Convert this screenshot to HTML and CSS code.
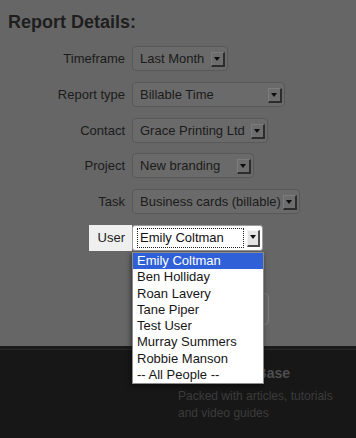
FILE: index.html
```html
<!DOCTYPE html>
<html lang="en">
<head>
    <meta charset="UTF-8">
    <meta name="viewport" content="width=device-width, initial-scale=1.0">
    <title>Report Details</title>
    <link rel="stylesheet" href="styles.css">
</head>
<body>
    <div class="page">
        <h1>Report Details:</h1>
        <div class="form">
            <div class="field">
                <div class="field-label"><label>Timeframe</label></div>
                <div class="select select-timeframe">
                    <span class="select-value">Last Month</span>
                    <span class="select-arrow"></span>
                </div>
            </div>
            <div class="field">
                <div class="field-label"><label>Report type</label></div>
                <div class="select select-type">
                    <span class="select-value">Billable Time</span>
                    <span class="select-arrow"></span>
                </div>
            </div>
            <div class="field">
                <div class="field-label"><label>Contact</label></div>
                <div class="select select-contact">
                    <span class="select-value">Grace Printing Ltd</span>
                    <span class="select-arrow"></span>
                </div>
            </div>
            <div class="field">
                <div class="field-label"><label>Project</label></div>
                <div class="select select-project">
                    <span class="select-value">New branding</span>
                    <span class="select-arrow"></span>
                </div>
            </div>
            <div class="field">
                <div class="field-label"><label>Task</label></div>
                <div class="select select-task">
                    <span class="select-value">Business cards (billable)</span>
                    <span class="select-arrow"></span>
                </div>
            </div>
            <div class="field is-active">
                <div class="field-label"><label>User</label></div>
                <div class="select select-user">
                    <span class="select-value">Emily Coltman</span>
                    <span class="select-arrow"></span>
                </div>
            </div>
        </div>

        <!-- submit button sits under the open list -->
        <div class="form-actions">
            <span class="button"></span>
        </div>

        <ul class="dropdown">
            <li class="is-selected">Emily Coltman</li>
            <li>Ben Holliday</li>
            <li>Roan Lavery</li>
            <li>Tane Piper</li>
            <li>Test User</li>
            <li>Murray Summers</li>
            <li>Robbie Manson</li>
            <li>-- All People --</li>
        </ul>
    </div>

    <div class="footer">
        <div class="help">
            <h3>Knowledge Base</h3>
            <p>Packed with articles, tutorials<br>and video guides</p>
        </div>
    </div>
</body>
</html>
```

FILE: styles.css
```css
*{
    margin: 0;
    padding: 0;
    box-sizing: border-box;
}

body{
    font-family: "Liberation Sans", Arial, sans-serif;
    font-size: 13px;
    color: #1b1b1b;
    background: #171717;
    width: 356px;
    height: 438px;
    overflow: hidden;
}

.page{
    position: relative;
    height: 346px;
    background: #666;
    padding-top: 11px;
}

.page h1{
    font-size: 18px;
    line-height: 22px;
    font-weight: bold;
    color: #1e1e1e;
    padding-left: 8px;
}

.form{
    margin-top: 13px;
    display: flex;
    flex-direction: column;
    gap: 10.75px;
}

.field{
    display: flex;
    align-items: center;
    height: 25px;
}

.field-label{
    width: 132px;
    height: 100%;
    display: flex;
    justify-content: flex-end;
}

.field-label label{
    display: flex;
    align-items: center;
    padding: 0 7px 0 9px;
}

.select{
    height: 100%;
    display: flex;
    align-items: center;
    border: 1px solid #585858;
    border-radius: 4px;
    background: #6a6a6a;
    padding: 0 2px 0 7px;
}

.select-value{
    flex: 1;
    min-width: 0;
    white-space: nowrap;
    overflow: hidden;
}

.select-arrow{
    position: relative;
    flex: 0 0 14px;
    height: 15px;
    margin-top: 2px;
    margin-left: 2px;
    background: #6e6e6e;
    border-top: 1px solid #7c7c7c;
    border-left: 1px solid #7c7c7c;
    border-right: 2px solid #2c2c2c;
    border-bottom: 2px solid #2c2c2c;
}

.select-arrow::after{
    content: "";
    position: absolute;
    left: 2px;
    top: 4px;
    border-left: 3.5px solid transparent;
    border-right: 3.5px solid transparent;
    border-top: 4px solid #0d0d0d;
}

.select-timeframe{ width: 96px; }
.select-type{ width: 153px; }
.select-contact{ width: 136px; }
.select-project{ width: 122px; }
.select-task{ width: 168px; }
.select-user{ width: 131px; }

/* highlighted row */
.field.is-active{
    height: 26px;
}

.field.is-active .field-label label{
    background: #efefef;
}

.field.is-active .select{
    background: #fff;
    border-color: #9c9c9c;
    border-radius: 3px;
    padding-left: 4px;
    color: #111;
}

.field.is-active .select-value{
    flex: 0 0 107px;
    border: 1px dotted #222;
    padding-left: 2px;
    line-height: 18px;
}

.field.is-active .select-arrow{
    flex-basis: 13px;
    height: 17px;
    margin-top: 1px;
    margin-left: 3px;
    background: #e4e4e4;
    border-top-color: #f4f4f4;
    border-left-color: #f4f4f4;
    border-right-color: #4a4a4a;
    border-bottom-color: #4a4a4a;
}

.field.is-active .select-arrow::after{
    left: 1.5px;
}

.form-actions{
    margin-top: 42px;
    padding-left: 132px;
}

.button{
    display: block;
    width: 137px;
    height: 32px;
    border: 1px solid #7b7b7b;
    border-radius: 4px;
    background: #686868;
}

.dropdown{
    position: absolute;
    left: 132px;
    top: 252px;
    width: 132px;
    list-style: none;
    background: #fff;
    border: 1px solid #8c8c8c;
    box-shadow: -1px 2px 5px rgba(0, 0, 0, .55);
    color: #161616;
}

.dropdown li{
    height: 16.25px;
    line-height: 16px;
    padding-left: 4px;
    white-space: nowrap;
}

.dropdown li.is-selected{
    background: #2f60d8;
    color: #fff;
}

.footer{
    height: 92px;
    background: linear-gradient(#1b1b1b 0, #1b1b1b 3px, #292929 3px, #292929 4px, #171717 4px);
    padding: 19px 0 0 178px;
}

.help h3{
    font-size: 14px;
    line-height: 17px;
    font-weight: bold;
    color: #4e4e4e;
}

.help p{
    margin-top: 6px;
    font-size: 12px;
    line-height: 17px;
    color: #3c3c3c;
}
```
